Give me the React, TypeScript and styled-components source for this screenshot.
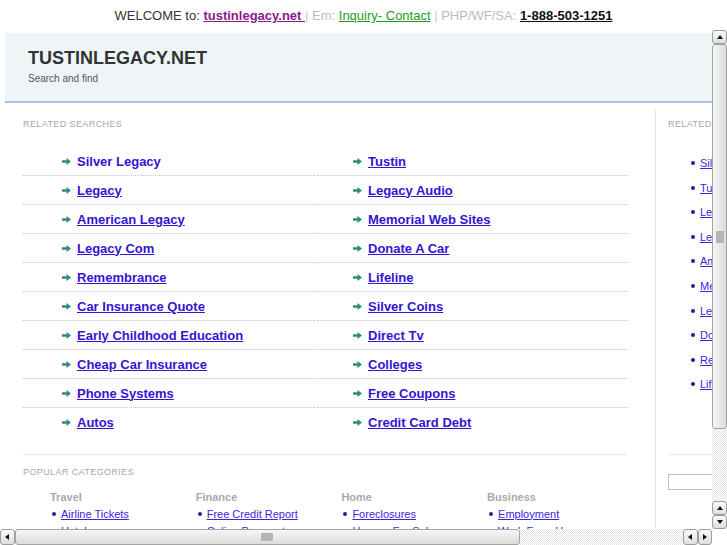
import styled, { createGlobalStyle } from "styled-components"

const GlobalStyle = createGlobalStyle`
    html, body {
        margin: 0;
        padding: 0;
        overflow: hidden;
        background: #fff;
    }
    body {
        font-family: "Liberation Sans", Arial, sans-serif;
    }
`

const leftLinks = [
    "Silver Legacy",
    "Legacy",
    "American Legacy",
    "Legacy Com",
    "Remembrance",
    "Car Insurance Quote",
    "Early Childhood Education",
    "Cheap Car Insurance",
    "Phone Systems",
    "Autos",
]

const rightLinks = [
    "Tustin",
    "Legacy Audio",
    "Memorial Web Sites",
    "Donate A Car",
    "Lifeline",
    "Silver Coins",
    "Direct Tv",
    "Colleges",
    "Free Coupons",
    "Credit Card Debt",
]

const sideLinks = [
    "Silver Legacy",
    "Tustin",
    "Legacy",
    "Legacy Audio",
    "American Legacy",
    "Memorial Web Sites",
    "Legacy Com",
    "Donate A Car",
    "Remembrance",
    "Lifeline",
]

const categories = [
    { title: "Travel", links: ["Airline Tickets", "Hotels"] },
    { title: "Finance", links: ["Free Credit Report", "Online Payment"] },
    { title: "Home", links: ["Foreclosures", "Houses For Sale"] },
    { title: "Business", links: ["Employment", "Work From Home"] },
]

const Arrow = () => (
    <svg width="9" height="7" viewBox="0 0 9 7">
        <polygon points="0,2.3 4.5,2.3 4.5,0 9,3.5 4.5,7 4.5,4.7 0,4.7" fill="#2e8b80" />
    </svg>
)

type Dir = "up" | "down" | "left" | "right"

const triangle: Record<Dir, string> = {
    up: "1,5 4,1 7,5",
    down: "1,1 4,5 7,1",
    left: "5,1 1,4 5,7",
    right: "1,1 5,4 1,7",
}

const ScrollArrow = ({ dir }: { dir: Dir }) => {
    const vertical = dir === "up" || dir === "down"
    return (
        <ScrollButton $vertical={vertical}>
            <svg width={vertical ? 8 : 6} height={vertical ? 6 : 8} viewBox={vertical ? "0 0 8 6" : "0 0 6 8"}>
                <polygon points={triangle[dir]} fill="#111" />
            </svg>
        </ScrollButton>
    )
}

export default function App() {
    const rows = leftLinks.map((l, i) => [l, rightLinks[i]])
    return (
        <>
            <GlobalStyle />
            <Page>
                <TopBar>
                    <Dark>WELCOME to: </Dark>
                    <SiteLink>tustinlegacy.net </SiteLink>
                    <Sep>|</Sep>
                    <Muted> Em: </Muted>
                    <MailLink>Inquiry- Contact</MailLink>
                    <Sep> | </Sep>
                    <Muted>PHP/WF/SA: </Muted>
                    <Phone>1-888-503-1251</Phone>
                </TopBar>

                <Frame>
                    <Viewport>
                        <Inner>
                            <Header>
                                <SiteTitle>TUSTINLEGACY.NET</SiteTitle>
                                <Tagline>Search and find</Tagline>
                            </Header>

                            <Body>
                                <MainCol>
                                    <SectionLabel>Related Searches</SectionLabel>
                                    <LinkGrid>
                                        {rows.flat().map((text, i) => (
                                            <LinkCell key={i} $last={i >= rows.length * 2 - 2}>
                                                <Arrow />
                                                <BigLink $plain={i === 0}>{text}</BigLink>
                                            </LinkCell>
                                        ))}
                                    </LinkGrid>

                                    <Divider $top={18} />

                                    <SectionLabel $top={12}>Popular Categories</SectionLabel>
                                    <Categories>
                                        {categories.map((c) => (
                                            <Category key={c.title}>
                                                <CategoryTitle>{c.title}</CategoryTitle>
                                                {c.links.map((l) => (
                                                    <CategoryItem key={l}>
                                                        <Bullet />
                                                        <SmallLink>{l}</SmallLink>
                                                    </CategoryItem>
                                                ))}
                                            </Category>
                                        ))}
                                    </Categories>
                                </MainCol>

                                <SideCol>
                                    <SectionLabel>Related Searches</SectionLabel>
                                    <SideList>
                                        {sideLinks.map((l) => (
                                            <SideItem key={l}>
                                                <Bullet />
                                                <SmallLink>{l}</SmallLink>
                                            </SideItem>
                                        ))}
                                    </SideList>
                                    <Divider $top={58} />
                                    <SearchInput />
                                </SideCol>
                            </Body>
                        </Inner>
                    </Viewport>

                    <VScroll>
                        <ScrollArrow dir="up" />
                        <Thumb $vertical>
                            <Grip $vertical />
                        </Thumb>
                        <Trough />
                        <ScrollArrow dir="up" />
                        <ScrollArrow dir="down" />
                    </VScroll>
                </Frame>

                <HScroll>
                    <ScrollArrow dir="left" />
                    <Thumb>
                        <Grip />
                    </Thumb>
                    <Trough />
                    <ScrollArrow dir="left" />
                    <ScrollArrow dir="right" />
                    <Corner />
                </HScroll>
            </Page>
        </>
    )
}

const Page = styled.div`
    width: 727px;
    height: 545px;
    display: flex;
    flex-direction: column;
    overflow: hidden;
`

const TopBar = styled.div`
    height: 30px;
    flex-shrink: 0;
    padding-top: 2px;
    box-sizing: border-box;
    line-height: 28px;
    text-align: center;
    font-size: 13px;
    white-space: pre;
`

const Dark = styled.span`
    color: #333;
`

const Muted = styled.span`
    color: #bbb;
`

const Sep = styled.span`
    color: #ccc;
`

const SiteLink = styled.a`
    color: #8a1a8a;
    font-weight: bold;
    text-decoration: underline;
`

const MailLink = styled.a`
    color: #1f9a1f;
    text-decoration: underline;
`

const Phone = styled.a`
    color: #111;
    font-weight: bold;
    text-decoration: underline;
`

const Frame = styled.div`
    display: flex;
    height: 499px;
    flex-shrink: 0;
`

const Viewport = styled.div`
    width: 712px;
    overflow: hidden;
`

const Inner = styled.div`
    width: 860px;
    padding: 3px 0 0 5px;
`

const Header = styled.div`
    background: #eff5f7;
    border-bottom: 2px solid #a9c5ea;
    padding: 14px 23px 15px;
`

const SiteTitle = styled.div`
    font-size: 18px;
    line-height: 22px;
    font-weight: bold;
    color: #333;
`

const Tagline = styled.div`
    margin-top: 3px;
    font-size: 10px;
    line-height: 14px;
    color: #555;
`

const Body = styled.div`
    display: flex;
    margin-top: 7px;
`

const MainCol = styled.div`
    width: 651px;
    box-sizing: border-box;
    padding: 9px 28px 0 18px;
    border-right: 1px solid #dde6f4;
    min-height: 430px;
`

const SideCol = styled.div`
    flex: 1;
    padding: 9px 0 0 12px;
`

const SectionLabel = styled.div<{ $top?: number }>`
    margin-top: ${(p) => p.$top ?? 0}px;
    font-size: 9px;
    line-height: 11px;
    letter-spacing: 0.4px;
    text-transform: uppercase;
    color: #a8a8a8;
    white-space: nowrap;
`

const LinkGrid = styled.div`
    display: grid;
    grid-template-columns: 291px 313px;
    margin-top: 17px;
`

const LinkCell = styled.div<{ $last: boolean }>`
    height: 28px;
    display: flex;
    align-items: center;
    gap: 6px;
    padding-left: 39px;
    border-bottom: 1px ${(p) => (p.$last ? "none" : "dotted #c4c4c4")};
`

const BigLink = styled.a<{ $plain?: boolean }>`
    font-size: 13px;
    font-weight: bold;
    color: #3215d2;
    text-decoration: ${(p) => (p.$plain ? "none" : "underline")};
`

const Divider = styled.div<{ $top: number }>`
    margin-top: ${(p) => p.$top}px;
    height: 1px;
    background: #dde8f8;
`

const Categories = styled.div`
    display: grid;
    grid-template-columns: repeat(4, 145.7px);
    margin: 11px 0 0 27px;
`

const Category = styled.div`
    display: flex;
    flex-direction: column;
`

const CategoryTitle = styled.div`
    font-size: 11px;
    line-height: 16px;
    font-weight: bold;
    color: #aaa;
`

const CategoryItem = styled.div`
    display: flex;
    align-items: center;
    gap: 5px;
    padding-left: 2px;
    height: 17px;
`

const Bullet = styled.span`
    width: 4px;
    height: 4px;
    border-radius: 50%;
    background: #23238f;
    flex-shrink: 0;
`

const SmallLink = styled.a`
    font-size: 11px;
    color: #3a26d8;
    text-decoration: underline;
    white-space: nowrap;
`

const SideList = styled.div`
    margin-top: 21px;
    padding-left: 23px;
`

const SideItem = styled.div`
    display: flex;
    align-items: center;
    gap: 5px;
    height: 24.55px;
`

const SearchInput = styled.input`
    display: block;
    margin-top: 19px;
    width: 140px;
    height: 16px;
    box-sizing: border-box;
    border: 1px solid #bdbdbd;
    background: #fff;
`

const VScroll = styled.div`
    width: 15px;
    display: flex;
    flex-direction: column;
`

const HScroll = styled.div`
    height: 16px;
    display: flex;
    flex-shrink: 0;
`

const ScrollButton = styled.div<{ $vertical: boolean }>`
    width: ${(p) => (p.$vertical ? "15px" : "14.5px")};
    height: ${(p) => (p.$vertical ? "14px" : "16px")};
    flex-shrink: 0;
    box-sizing: border-box;
    border: 1px solid #9c9c9c;
    border-radius: 3px;
    background: linear-gradient(#fafafa, #dedede);
    display: flex;
    align-items: center;
    justify-content: center;
`

const Thumb = styled.div<{ $vertical?: boolean }>`
    flex-shrink: 0;
    box-sizing: border-box;
    ${(p) => (p.$vertical ? "width: 15px; height: 385px;" : "width: 505px; height: 16px;")}
    border: 1px solid #a3a3a3;
    border-radius: 3px;
    background: linear-gradient(${(p) => (p.$vertical ? "to right" : "to bottom")}, #f6f6f6, #dcdcdc);
    display: flex;
    align-items: center;
    justify-content: center;
`

const Grip = styled.div<{ $vertical?: boolean }>`
    width: ${(p) => (p.$vertical ? "8px" : "12px")};
    height: ${(p) => (p.$vertical ? "12px" : "8px")};
    background: radial-gradient(circle, #b4b4b4 0.7px, transparent 0.9px) 0 0 / 2px 2px;
`

const Trough = styled.div`
    flex: 1;
    background: repeating-conic-gradient(#e6e6e6 0 25%, #fff 0 50%) 0 0 / 2px 2px;
`

const Corner = styled.div`
    width: 15px;
    flex-shrink: 0;
    background: #fff;
`
